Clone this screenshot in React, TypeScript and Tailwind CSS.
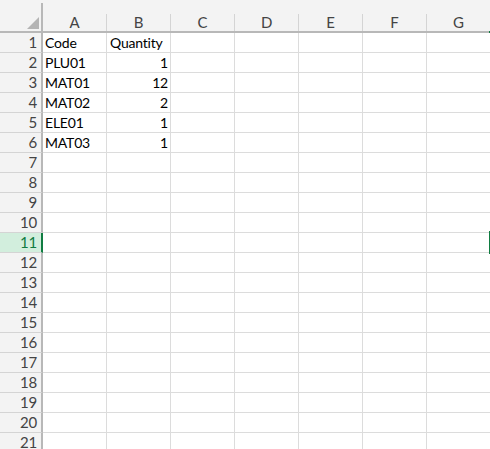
import React from "react";

const cols = ["A", "B", "C", "D", "E", "F", "G"];
const data: Record<number, [string, string]> = {
  1: ["Code", "Quantity"],
  2: ["PLU01", "1"],
  3: ["MAT01", "12"],
  4: ["MAT02", "2"],
  5: ["ELE01", "1"],
  6: ["MAT03", "1"],
};

export default function App() {
  const rows = Array.from({ length: 21 }, (_, i) => i + 1);
  return (
    <div
      className="relative w-[490px] h-[449px] overflow-hidden bg-white text-[14px] tracking-[-0.2px] leading-none"
      style={{ fontFamily: "Lato, 'Noto Sans', sans-serif" }}
    >
      {/* header */}
      <div className="flex h-[33px] bg-[#f3f3f3] border-b-2 border-[#b8b8b8]">
        <div className="relative w-[43px] shrink-0 mt-[3px] border-r-2 border-[#b8b8b8]">
          <div
            className="absolute right-[2px] bottom-[2px] w-0 h-0"
            style={{ borderRight: "12px solid #b4b4b4", borderTop: "12px solid transparent" }}
          />
        </div>
        {cols.map((c) => (
          <div key={c} className="w-[64px] shrink-0 flex flex-col">
            <div className="h-[14px]" />
            <div className="flex-1 flex items-center justify-center border-r border-[#d4d4d4] text-[#444] text-[15px] pb-[1px]">
              {c}
            </div>
          </div>
        ))}
      </div>
      {/* rows */}
      {rows.map((r) => {
        const sel = r === 11;
        const d = data[r];
        return (
          <div key={r} className="flex h-[20px]">
            <div
              className={
                "w-[43px] shrink-0 flex items-center justify-end pr-[4px] border-r-2 border-b text-[15px] " +
                (sel
                  ? "bg-[#d2eedd] text-[#107c41] border-r-[#107c41] border-b-[#d4d4d4]"
                  : "bg-[#f3f3f3] text-[#444] border-r-[#b8b8b8] border-b-[#d4d4d4]")
              }
            >
              {r}
            </div>
            {cols.map((c, ci) => (
              <div
                key={c}
                className={
                  "w-[64px] shrink-0 flex items-center border-r border-b border-[#dcdcdc] text-black " +
                  (ci === 1 && r > 1 ? "justify-end pr-[2px]" : ci === 0 ? "pl-[2px]" : "pl-[3px]")
                }
              >
                {d && ci < 2 ? d[ci] : ""}
              </div>
            ))}
          </div>
        );
      })}
      {/* selected cell border (H11, off-screen) */}
      <div className="absolute left-[489px] top-[231px] w-[2px] h-[23px] bg-[#107c41]" />
      <div className="absolute left-[489px] top-[31px] w-[2px] h-[2px] bg-[#107c41]" />
    </div>
  );
}
